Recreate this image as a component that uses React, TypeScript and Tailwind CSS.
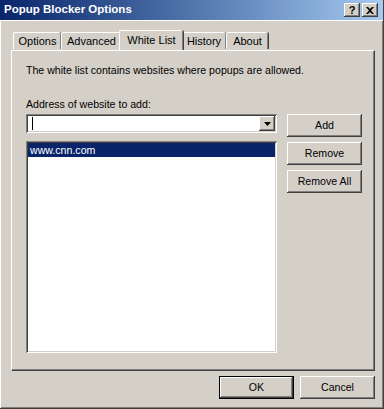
import React from "react";

const raised =
  "shadow-[inset_-1px_-1px_#404040,inset_1px_1px_#ffffff,inset_-2px_-2px_#808080,inset_2px_2px_#d4d0c8]";
const sunken =
  "shadow-[inset_1px_1px_#808080,inset_-1px_-1px_#ffffff,inset_2px_2px_#404040,inset_-2px_-2px_#d4d0c8]";

function Btn({ label, def }: { label: string; def?: boolean }) {
  return (
    <div
      className={`w-[75px] h-[23px] flex items-center justify-center bg-[#d4d0c8] text-black ${
        def ? "border border-black" : ""
      } `}
    >
      <div className={`w-full h-full flex items-center justify-center ${raised}`}>{label}</div>
    </div>
  );
}

function Tab({ label, w, sel }: { label: string; w: number; sel?: boolean }) {
  if (sel) {
    return (
      <div
        className="relative z-10 -mx-[2px] h-[20px] -mb-[1px] flex items-center justify-center bg-[#d4d0c8] border-t border-l border-white rounded-tl-[2px] rounded-tr-[2px] shadow-[inset_-1px_0_#808080,1px_0_#404040] pb-[1px]"
        style={{ width: w + 4 }}
      >
        {label}
      </div>
    );
  }
  return (
    <div
      className="mt-[2px] h-[17px] flex items-center justify-center bg-[#d4d0c8] border-t border-l border-white rounded-tl-[2px] rounded-tr-[2px] shadow-[inset_-1px_0_#808080,1px_0_#404040] pt-[1px]"
      style={{ width: w }}
    >
      {label}
    </div>
  );
}

export default function App() {
  return (
    <div
      className="w-[384px] h-[409px] bg-[#d4d0c8] text-[10.6px] text-black flex flex-col border-r border-b border-[#404040] shadow-[inset_-1px_-1px_#808080]"
      style={{ fontFamily: "Tahoma, 'Liberation Sans', Arial, sans-serif" }}
    >
      {/* title bar */}
      <div className="h-[20px] flex items-center justify-between bg-gradient-to-r from-[#0a246a] to-[#a6caf0] pl-[4px] pr-[5px]">
        <span className="text-white font-bold text-[11.5px]">Popup Blocker Options</span>
        <div className="flex gap-[2px] items-center">
          <div className={`w-[16px] h-[14px] bg-[#d4d0c8] flex items-center justify-center font-bold text-[11px] leading-none ${raised}`}>
            ?
          </div>
          <div className={`w-[16px] h-[14px] bg-[#d4d0c8] flex items-center justify-center ${raised}`}>
            <svg width="8" height="7" viewBox="0 0 8 7">
              <path d="M0 0h2l2 2 2-2h2L5 3.5 8 7H6L4 5 2 7H0l3-3.5z" fill="#000" />
            </svg>
          </div>
        </div>
      </div>

      <div className="flex-1 flex flex-col pl-[10px] pr-[8px] pt-[9px] border-l border-t border-white">
        {/* tabs */}
        <div className="flex items-start pl-[2px] h-[20px] text-[11px]">
          <Tab label="Options" w={48} />
          <Tab label="Advanced" w={60} />
          <Tab label="White List" w={60} sel />
          <Tab label="History" w={45} />
          <Tab label="About" w={42} />
        </div>
        {/* panel */}
        <div className="h-[321px] border-t border-l border-white border-r border-b border-r-[#404040] border-b-[#404040] shadow-[inset_-1px_-1px_#808080] pl-[14px] pr-[13px] pt-[13px] flex flex-col">
          <div className="h-[13px] leading-[13px]">The white list contains websites where popups are allowed.</div>
          <div className="h-[13px] leading-[13px] mt-[21px]">Address of website to add:</div>
          <div className="flex mt-[3px] gap-[10px]">
            <div className="flex flex-col gap-[8px]">
              <div className={`w-[251px] h-[19px] bg-white relative flex items-center ${sunken}`}>
                <div className="ml-[6px] w-px h-[13px] bg-black" />
                <div className={`absolute right-[2px] top-[2px] w-[16px] h-[15px] bg-[#d4d0c8] flex items-center justify-center ${raised}`}>
                  <svg width="7" height="4" viewBox="0 0 7 4">
                    <path d="M0 0h7L3.5 4z" fill="#000" />
                  </svg>
                </div>
              </div>
              <div className={`w-[251px] h-[212px] bg-white p-[2px] ${sunken}`}>
                <div className="h-[14px] bg-[#0a246a] text-white leading-[14px] pl-[2px]">www.cnn.com</div>
              </div>
            </div>
            <div className="flex flex-col gap-[5px]">
              <Btn label="Add" />
              <Btn label="Remove" />
              <Btn label="Remove All" />
            </div>
          </div>
        </div>
        {/* bottom buttons */}
        <div className="flex justify-end gap-[6px] mt-[5px] pr-[0px]">
          <Btn label="OK" def />
          <Btn label="Cancel" />
        </div>
      </div>
    </div>
  );
}
